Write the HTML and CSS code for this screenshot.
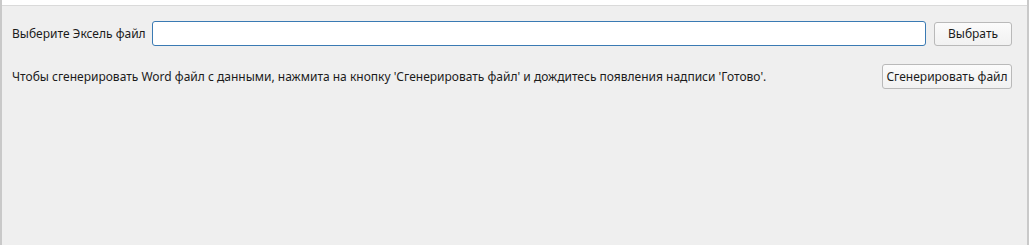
FILE: index.html
```html
<!DOCTYPE html>
<html lang="ru">
<head>
<meta charset="utf-8">
<title>Генератор</title>
<link rel="stylesheet" href="styles.css">
</head>
<body>
<div class="window">
  <div class="topbar"></div>
  <div class="panel">
    <div class="row row-file">
      <label class="label">Выберите Эксель файл</label>
      <input class="path" type="text">
      <button class="btn btn-pick">Выбрать</button>
    </div>
    <div class="row row-gen">
      <span class="hint">Чтобы сгенерировать Word файл с данными, нажмита на кнопку 'Сгенерировать файл' и дождитесь появления надписи 'Готово'.</span>
      <button class="btn btn-gen">Сгенерировать файл</button>
    </div>
  </div>
</div>
</body>
</html>
```

FILE: styles.css
```css
html, body {
  margin: 0;
  padding: 0;
  width: 1029px;
  height: 245px;
  overflow: hidden;
  background: #ffffff;
}
.window {
  height: 245px;
  display: flex;
  flex-direction: column;
  border-left: 2px solid #c9c9c9;
  border-right: 2px solid #c9c9c9;
  box-sizing: border-box;
  font-family: "Noto Sans", "DejaVu Sans", sans-serif;
  font-size: 12px;
  color: #1b1b1b;
}
.topbar {
  height: 5px;
  background: #ffffff;
  border-bottom: 1px solid #dadada;
}
.panel {
  flex: 1;
  background: #efefef;
  padding: 15px 15px 0 10px;
  display: flex;
  flex-direction: column;
}
.row {
  display: flex;
  align-items: center;
}
.row-file {
  height: 25px;
  gap: 7px;
}
.label {
  white-space: nowrap;
}
.path {
  flex: 1;
  min-width: 0;
  height: 25px;
  box-sizing: border-box;
  margin: 0 1px 0 -1px;
  border: 1px solid #3a7ab3;
  border-radius: 3px;
  background: #ffffff;
  outline: none;
  padding: 0 4px;
  font: inherit;
}
.btn {
  flex-shrink: 0;
  white-space: nowrap;
  height: 24px;
  box-sizing: border-box;
  margin: 0;
  border: 1px solid #b9b9b9;
  border-radius: 3px;
  background: linear-gradient(#fbfbfb, #f1f1f1);
  font: inherit;
  color: #1b1b1b;
  padding: 0 8px;
}
.btn-pick {
  width: 78px;
}
.row-gen {
  margin-top: 18px;
  justify-content: space-between;
}
.btn-gen {
  width: 130px;
  height: 25px;
  padding: 0 2px;
}
```
